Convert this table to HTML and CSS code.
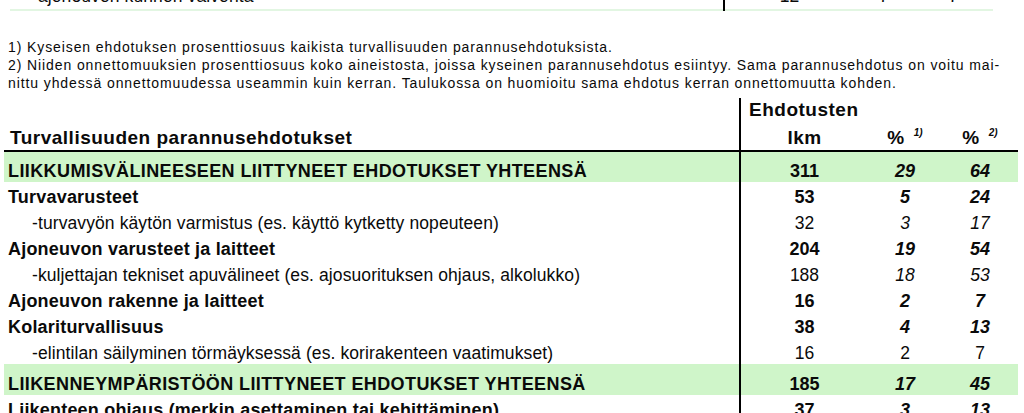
FILE: index.html
```html
<!DOCTYPE html>
<html lang="fi">
<head>
<meta charset="utf-8">
<title>Turvallisuuden parannusehdotukset</title>
<link rel="stylesheet" href="styles.css">
</head>
<body>
<table class="prev">
  <colgroup><col class="p-label"><col class="p-n1"><col class="p-n2"><col class="p-n3"></colgroup>
  <tr>
    <td class="sub">-ajoneuvon kunnon valvonta</td>
    <td class="num">12</td>
    <td class="num it">7</td>
    <td class="num it">7</td>
  </tr>
</table>

<div class="notes">
  <p>1) Kyseisen ehdotuksen prosenttiosuus kaikista turvallisuuden parannusehdotuksista.</p>
  <p>2) Niiden onnettomuuksien prosenttiosuus koko aineistosta, joissa kyseinen parannusehdotus esiintyy. Sama parannusehdotus on voitu mai-<br>nittu yhdessä onnettomuudessa useammin kuin kerran. Taulukossa on huomioitu sama ehdotus kerran onnettomuutta kohden.</p>
</div>

<table class="main">
  <colgroup><col class="c-label"><col class="c-n1"><col class="c-n2"><col class="c-n3"></colgroup>
  <thead>
    <tr class="h1">
      <th class="title"></th>
      <th class="group" colspan="3">Ehdotusten</th>
    </tr>
    <tr class="h2">
      <th class="title">Turvallisuuden parannusehdotukset</th>
      <th class="num">lkm</th>
      <th class="num">%<sup>1)</sup></th>
      <th class="num">%<sup>2)</sup></th>
    </tr>
  </thead>
  <tbody>
    <tr class="total">
      <td>LIIKKUMISVÄLINEESEEN LIITTYNEET EHDOTUKSET YHTEENSÄ</td>
      <td class="num">311</td><td class="num it">29</td><td class="num it">64</td>
    </tr>
    <tr class="cat">
      <td>Turvavarusteet</td>
      <td class="num">53</td><td class="num it">5</td><td class="num it">24</td>
    </tr>
    <tr class="item">
      <td class="sub">-turvavyön käytön varmistus (es. käyttö kytketty nopeuteen)</td>
      <td class="num">32</td><td class="num it">3</td><td class="num it">17</td>
    </tr>
    <tr class="cat">
      <td>Ajoneuvon varusteet ja laitteet</td>
      <td class="num">204</td><td class="num it">19</td><td class="num it">54</td>
    </tr>
    <tr class="item">
      <td class="sub">-kuljettajan tekniset apuvälineet (es. ajosuorituksen ohjaus, alkolukko)</td>
      <td class="num">188</td><td class="num it">18</td><td class="num it">53</td>
    </tr>
    <tr class="cat">
      <td>Ajoneuvon rakenne ja laitteet</td>
      <td class="num">16</td><td class="num it">2</td><td class="num it">7</td>
    </tr>
    <tr class="cat">
      <td>Kolariturvallisuus</td>
      <td class="num">38</td><td class="num it">4</td><td class="num it">13</td>
    </tr>
    <tr class="item">
      <td class="sub">-elintilan säilyminen törmäyksessä (es. korirakenteen vaatimukset)</td>
      <td class="num">16</td><td class="num">2</td><td class="num">7</td>
    </tr>
    <tr class="total">
      <td>LIIKENNEYMPÄRISTÖÖN LIITTYNEET EHDOTUKSET YHTEENSÄ</td>
      <td class="num">185</td><td class="num it">17</td><td class="num it">45</td>
    </tr>
    <tr class="cat">
      <td>Liikenteen ohjaus (merkin asettaminen tai kehittäminen)</td>
      <td class="num">37</td><td class="num it">3</td><td class="num it">13</td>
    </tr>
  </tbody>
</table>
</body>
</html>
```
FILE: styles.css
```css
html, body {
  margin: 0;
  padding: 0;
  background: #ffffff;
  color: #0a0a0a;
  font-family: "Liberation Sans", Arial, sans-serif;
  overflow: hidden;
}

table {
  border-collapse: collapse;
  border-spacing: 0;
  table-layout: fixed;
}

td, th {
  padding: 0;
  white-space: nowrap;
}

/* previous (cut-off) table */
.prev {
  margin: -16px 0 0 10px;
  width: 983px;
  font-size: 17.5px;
  letter-spacing: 0.1px;
}
.prev tr {
  height: 26px;
  border-bottom: 2px solid #e2f6e2;
}
.p-label { width: 714px; }
.p-n1 { width: 130px; }
.p-n2 { width: 60px; }
.p-n3 { width: 79px; }
.prev td:first-child { border-right: 2px solid #000; }
.prev .sub { padding-left: 22px; }
.prev .num { text-align: center; }

/* notes */
.notes {
  margin: 27px 0 0 8px;
  font-size: 14px;
  line-height: 18px;
  letter-spacing: 0.9px;
}
.notes p { margin: 0; }

/* main table */
.main {
  margin: 6px 0 0 4px;
  width: 1014px;
}
.c-label { width: 736px; }
.c-n1 { width: 128px; }
.c-n2 { width: 74px; }
.c-n3 { width: 76px; }

.main td:first-child,
.main th:first-child { border-right: 2px solid #000; }

.main th {
  font-weight: bold;
  text-align: left;
  font-size: 19px;
  letter-spacing: 0.5px;
}
.h1 { height: 27px; }
.h2 { height: 26px; border-bottom: 2px solid #000; }
.h2 .title { padding-left: 6px; vertical-align: bottom; padding-bottom: 1px; }
.h1 .group { padding-left: 8px; vertical-align: bottom; padding-bottom: 4px; }
.h2 .num { text-align: center; vertical-align: bottom; padding-bottom: 1px; }
.h2 sup {
  font-size: 10px;
  font-style: italic;
  letter-spacing: 0;
  vertical-align: 8px;
  margin-left: 9px;
}

.main td { padding-left: 4px; }
.main td.num { text-align: center; padding-left: 0; letter-spacing: 0; }
.main .it { font-style: italic; }

.total {
  height: 31px;
  background: #cff5c9;
  font-weight: bold;
}
.total td {
  vertical-align: bottom;
  padding-bottom: 0;
  font-size: 18px;
  letter-spacing: 0.4px;
}

.cat { height: 26px; font-weight: bold; }
.cat td { font-size: 18px; letter-spacing: 0.2px; padding-top: 4px; }
.item { height: 26px; }
.item td { font-size: 17.5px; letter-spacing: 0.1px; padding-top: 4px; }
.item .num { font-size: 17.5px; }
.main .sub { padding-left: 28px; }
```
